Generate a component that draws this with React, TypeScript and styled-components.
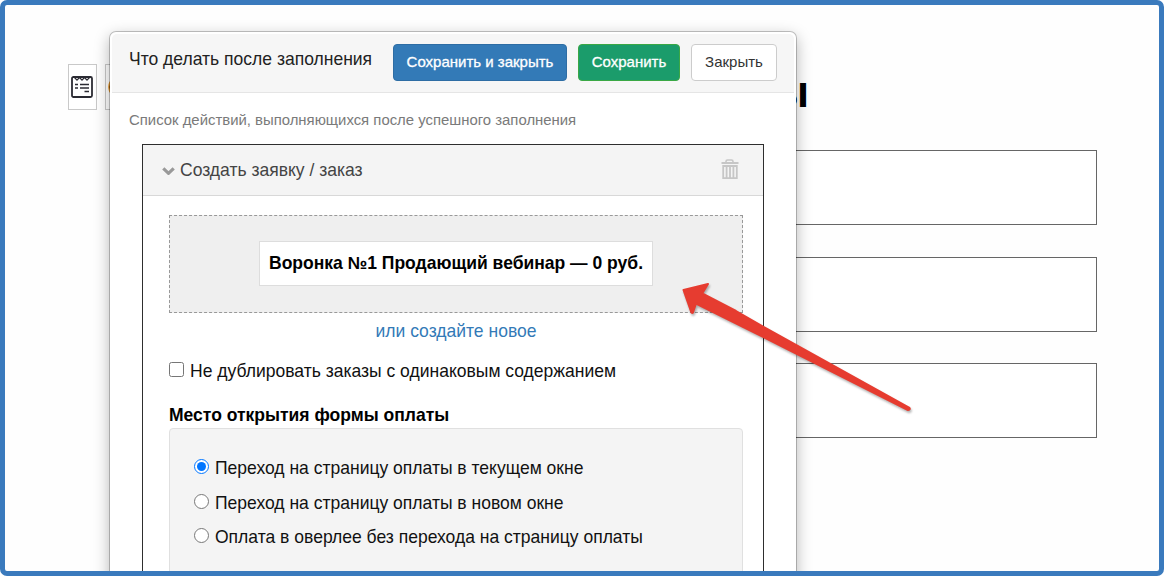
import React from "react";
import styled, { createGlobalStyle, css } from "styled-components";

const Global = createGlobalStyle`
  * { box-sizing: border-box; }
  body { margin: 0; background: #fff; font-family: "Liberation Sans", Arial, sans-serif; overflow: hidden; }
`;

const Frame = styled.div`
  position: relative;
  width: 1164px;
  height: 576px;
  border: 5px solid #3a7abd;
  border-radius: 7px;
  background: #fefefe;
  overflow: hidden;
`;

const Page = styled.main`
  height: 100%;
  display: flex;
  justify-content: space-between;
  padding: 59px 62px 0 63px;
`;

const Tools = styled.div`
  display: flex;
  gap: 8px;
  height: 46px;
`;

const Tool = styled.div`
  display: flex;
  align-items: center;
  justify-content: center;
  width: 29px;
  padding-right: 1px;
  border: 1px solid #c9c9c9;
  background: #fff;
`;

const FormArea = styled.section`
  width: 520px;
  padding-top: 2px;
`;

const Heading = styled.h1`
  margin: 0 0 33px;
  width: 232px;
  height: 51px;
  font-size: 44px;
  line-height: 51px;
  text-align: right;
  white-space: nowrap;
  color: #000;
`;

const Field = styled.div<{ $gap: number }>`
  height: 75px;
  margin-bottom: ${(p) => p.$gap}px;
  border: 1px solid #666;
  background: #fff;
`;

const Dialog = styled.div`
  position: absolute;
  left: 104px;
  top: 26px;
  width: 688px;
  height: 620px;
  padding: 2px;
  border: 1px solid rgba(0, 0, 0, 0.22);
  border-radius: 7px;
  background: #fff;
  background-clip: padding-box;
  box-shadow: 0 5px 15px rgba(0, 0, 0, 0.28);
`;

const DialogHeader = styled.header`
  display: flex;
  align-items: flex-start;
  height: 59px;
  padding: 10px 17px 0 17px;
  border-bottom: 1px solid #e5e5e5;
  border-radius: 5px 5px 0 0;
  background: #f6f6f6;
`;

const Title = styled.div`
  flex: 1;
  padding-top: 4px;
  font-size: 17.53px;
  line-height: 22px;
  white-space: nowrap;
  color: #222;
`;

const variants = {
  primary: css`background: #337ab7; border-color: #2e6da4; color: #fff; -webkit-text-stroke: 0.3px #fff;`,
  success: css`background: #1b9c6b; border-color: #3aa845; color: #fff; -webkit-text-stroke: 0.3px #fff;`,
  plain: css`background: #fff; border-color: #ccc; color: #333;`,
};

const Button = styled.button<{ $kind: keyof typeof variants; $width: number }>`
  width: ${(p) => p.$width}px;
  height: 37px;
  margin-left: 11px;
  padding: 0 0 2px;
  border: 1px solid;
  border-radius: 4px;
  font: 15px "Liberation Sans", Arial, sans-serif;
  white-space: nowrap;
  ${(p) => variants[p.$kind]}
`;

const DialogBody = styled.div`
  padding: 17px 29px 0 30px;
`;

const Hint = styled.p`
  margin: 0 0 14px -13px;
  font-size: 14.9px;
  line-height: 20px;
  color: #7a7a7a;
`;

const Panel = styled.section`
  width: 622px;
  height: 500px;
  border: 1px solid #2e2e2e;
  background: #fff;
`;

const PanelHeader = styled.div`
  display: flex;
  align-items: center;
  height: 51px;
  padding: 0 24px 1px 19px;
  border-bottom: 1px solid #d8d8d8;
  background: #f4f4f4;
  font-size: 17.53px;
  color: #444;

  span { flex: 1; margin-left: 5px; padding-top: 1px; }
`;

const PanelBody = styled.div`
  padding: 19px 20px 0 26px;
  font-size: 17.53px;
  color: #111;
`;

const DropZone = styled.div`
  display: flex;
  align-items: center;
  justify-content: center;
  height: 98px;
  border: 1px dashed #999;
  background: #efefef;
`;

const Offer = styled.div`
  width: 394px;
  height: 45px;
  margin-bottom: 1px;
  border: 1px solid #ddd;
  background: #fff;
  font-weight: bold;
  line-height: 43px;
  text-align: center;
  white-space: nowrap;
  color: #000;
`;

const CreateLink = styled.a`
  display: block;
  margin-top: 7px;
  line-height: 22px;
  text-align: center;
  color: #337ab7;
`;

const Choice = styled.label<{ $top: number }>`
  display: flex;
  align-items: flex-start;
  gap: 6px;
  height: 22px;
  margin-top: ${(p) => p.$top}px;
  line-height: 22px;
  white-space: nowrap;

  input { width: 15px; height: 15px; margin: 2px 0 0; }
`;

const GroupTitle = styled.div`
  margin-top: 22px;
  font-weight: bold;
  line-height: 22px;
  color: #000;
`;

const Well = styled.div`
  height: 200px;
  margin-top: 2px;
  padding: 1px 24px;
  border: 1px solid #e0e0e0;
  border-radius: 4px;
  background: #f4f4f4;
`;

const Arrow = styled.svg`
  position: absolute;
  left: 665px;
  top: 270px;
  filter: drop-shadow(1px 2px 1px rgba(0, 0, 0, 0.3));
`;

const FormIcon = () => (
  <svg width="22" height="22" viewBox="0 0 22 22" fill="none" stroke="#2b2b33">
    <rect x="1" y="1" width="20" height="20" rx="1.5" strokeWidth="1.8" />
    <path d="M3.5 1.5l2.5 2.7 2.5-2.7L11 4.2l2.5-2.7L16 4.2l2.5-2.7" strokeWidth="1.2" />
    <path d="M4 8.5h3M9 8.5h9M4 12h3M9 12h9M13.5 15.5h4.5" strokeWidth="1.6" />
  </svg>
);

const CoinIcon = () => (
  <svg width="22" height="22" viewBox="0 0 22 22">
    <circle cx="11" cy="11" r="10.2" fill="#6b3a10" stroke="#f0a030" strokeWidth="1.2" />
  </svg>
);

const ChevronIcon = () => (
  <svg width="13" height="11" viewBox="0 0 13 11" fill="none" stroke="#999" strokeWidth="3.2">
    <path d="M1.3 4.3l5.2 5 5.2-5" />
  </svg>
);

const TrashIcon = () => (
  <svg width="18" height="21" viewBox="0 0 18 21" fill="none" stroke="#c6c6c6">
    <path d="M5 3.5V2.5Q5 1 6.5 1h4Q12 1 12 2.5V3.5" strokeWidth="1.6" />
    <path d="M.5 4h17" strokeWidth="2" />
    <path d="M2.2 7h13.6v12.2H2.2zM5.6 8v11M9 8v11M12.4 8v11" strokeWidth="1.8" />
  </svg>
);

export default function App() {
  return (
    <>
      <Global />
      <Frame>
        <Page>
          <Tools>
            <Tool><FormIcon /></Tool>
            <Tool><CoinIcon /></Tool>
          </Tools>
          <FormArea>
            <Heading>ы</Heading>
            <Field $gap={32} />
            <Field $gap={31} />
            <Field $gap={0} />
          </FormArea>
        </Page>
        <Dialog>
          <DialogHeader>
            <Title>Что делать после заполнения</Title>
            <Button $kind="primary" $width={174}>Сохранить и закрыть</Button>
            <Button $kind="success" $width={102}>Сохранить</Button>
            <Button $kind="plain" $width={86}>Закрыть</Button>
          </DialogHeader>
          <DialogBody>
            <Hint>Список действий, выполняющихся после успешного заполнения</Hint>
            <Panel>
              <PanelHeader>
                <ChevronIcon />
                <span>Создать заявку / заказ</span>
                <TrashIcon />
              </PanelHeader>
              <PanelBody>
                <DropZone>
                  <Offer>Воронка №1 Продающий вебинар — 0 руб.</Offer>
                </DropZone>
                <CreateLink>или создайте новое</CreateLink>
                <Choice $top={18}>
                  <input type="checkbox" />Не дублировать заказы с одинаковым содержанием
                </Choice>
                <GroupTitle>Место открытия формы оплаты</GroupTitle>
                <Well>
                  <Choice $top={27}>
                    <input type="radio" name="place" defaultChecked />Переход на страницу оплаты в текущем окне
                  </Choice>
                  <Choice $top={13}>
                    <input type="radio" name="place" />Переход на страницу оплаты в новом окне
                  </Choice>
                  <Choice $top={12}>
                    <input type="radio" name="place" />Оплата в оверлее без перехода на страницу оплаты
                  </Choice>
                </Well>
              </PanelBody>
            </Panel>
          </DialogBody>
        </Dialog>
        <Arrow width="250" height="145" viewBox="670 275 250 145">
          <path d="M683.5 290L708 284L702.2 293.5L736 311L763 326.5L909 407.5Q911 409.5 908 410L762.5 336.5L696 303.5L693 312.5Q692 313.5 691.2 312Z" fill="#e63c30" stroke="#e63c30" strokeWidth="2" strokeLinejoin="round" />
        </Arrow>
      </Frame>
    </>
  );
}
